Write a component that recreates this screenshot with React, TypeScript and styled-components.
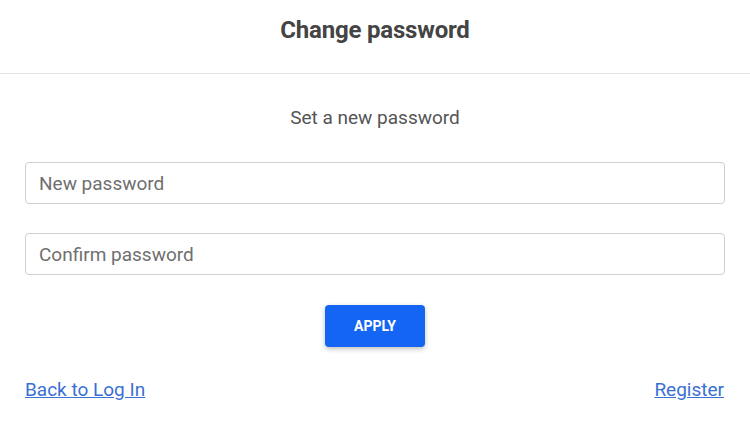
import React from "react";
import styled, { createGlobalStyle } from "styled-components";

const Global = createGlobalStyle`
  html, body { margin: 0; padding: 0; background: #fff; }
  body { font-family: Roboto, "Noto Sans", sans-serif; }
  * { box-sizing: border-box; }
`;

const Page = styled.div`
  width: 750px;
  display: flex;
  flex-direction: column;
`;

const Header = styled.header`
  height: 74px;
  display: flex;
  align-items: center;
  justify-content: center;
  border-bottom: 1px solid #e6e6e6;
  padding-bottom: 14px;
`;

const Title = styled.h1`
  margin: 0;
  font-size: 24px;
  font-weight: 700;
  color: #444;
  letter-spacing: -0.2px;
`;

const Main = styled.main`
  display: flex;
  flex-direction: column;
  padding: 32px 25px 0;
`;

const Subtitle = styled.p`
  margin: 0;
  text-align: center;
  font-size: 19px;
  line-height: 24px;
  color: #555;
`;

const Form = styled.form`
  display: flex;
  flex-direction: column;
  gap: 29px;
  margin-top: 32px;
`;

const Input = styled.input`
  width: 100%;
  height: 42px;
  border: 1px solid #cfcfcf;
  border-radius: 4px;
  padding: 0 13px;
  font-family: Roboto, sans-serif;
  font-size: 19px;
  color: #333;
  outline: none;
  &::placeholder { color: #6f6f6f; }
`;

const ButtonRow = styled.div`
  display: flex;
  justify-content: center;
  margin-top: 1px;
`;

const Button = styled.button`
  width: 100px;
  height: 42px;
  border: none;
  border-radius: 4px;
  background: #1565f5;
  color: #fff;
  font-family: Roboto, sans-serif;
  font-weight: 700;
  font-size: 14px;
  box-shadow: 0 2px 5px rgba(0, 0, 0, 0.25);
  cursor: pointer;
`;

const Links = styled.div`
  display: flex;
  justify-content: space-between;
  margin-top: 31px;
  padding-right: 1px;
`;

const Link = styled.a`
  font-size: 19px;
  line-height: 24px;
  color: #3a6fd4;
  text-decoration: underline;
`;

export default function App() {
  return (
    <Page>
      <Global />
      <Header>
        <Title>Change password</Title>
      </Header>
      <Main>
        <Subtitle>Set a new password</Subtitle>
        <Form onSubmit={(e) => e.preventDefault()}>
          <Input type="password" placeholder="New password" />
          <Input type="password" placeholder="Confirm password" />
          <ButtonRow>
            <Button type="submit">APPLY</Button>
          </ButtonRow>
        </Form>
        <Links>
          <Link href="#">Back to Log In</Link>
          <Link href="#">Register</Link>
        </Links>
      </Main>
    </Page>
  );
}
